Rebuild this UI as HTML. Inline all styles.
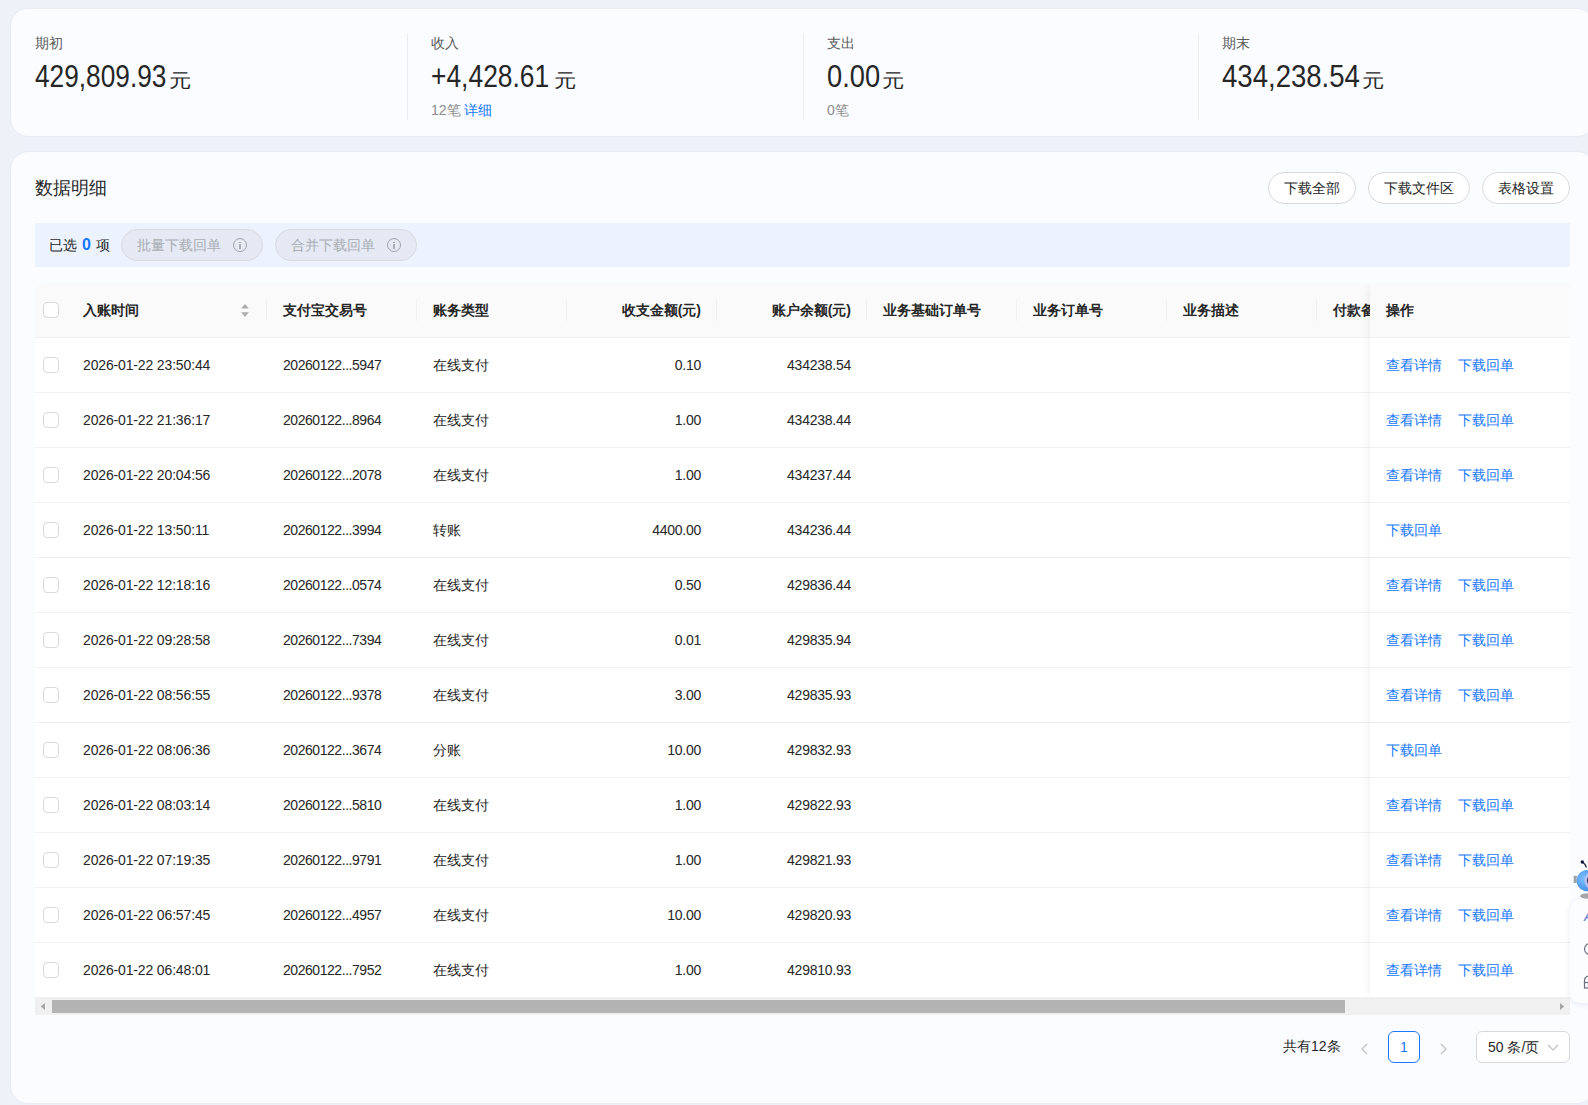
<!DOCTYPE html>
<html><head><meta charset="utf-8">
<style>
*{box-sizing:border-box;margin:0;padding:0}
html,body{width:1588px;height:1105px;overflow:hidden}
body{background:#eef1f8;font-family:"Liberation Sans",sans-serif;color:#262626;position:relative}
.abs{position:absolute;white-space:nowrap}
.card{position:absolute;background:#fafcff;border-radius:17px;box-shadow:0 0 2px rgba(90,110,150,.12)}
.lbl{font-size:14px;color:#595959;line-height:16px}
.big{font-size:31px;line-height:32px;color:#262626;transform-origin:0 0}
.yuan{font-size:21px;line-height:24px;color:#262626;transform:scale(1.06,0.9);transform-origin:0 19px}
.sub{font-size:14px;color:#8c8c8c;line-height:16px}
.vd{position:absolute;width:1px;background:#ebedf0}
.btn{position:absolute;height:32px;border:1px solid #d9d9d9;border-radius:16px;background:#fff;font-size:14px;line-height:30px;text-align:center;color:#262626}
.pill{position:absolute;height:32px;border:1px solid #d8dadd;border-radius:16px;background:#e4e9f3;font-size:14px;line-height:30px;color:#a9adb4;padding-left:15px}
.info{position:absolute;width:14px;height:14px;border:1.3px solid #9fa3aa;border-radius:50%}
.info:before{content:"";position:absolute;left:5px;top:2.5px;width:1.5px;height:1.5px;background:#a9adb4}
.info:after{content:"";position:absolute;left:5px;top:5px;width:1.5px;height:5px;background:#a9adb4}
.tbl{position:absolute;left:35px;top:283px;width:1535px;height:732px;background:#fff;border-radius:8px 0 0 0;overflow:hidden}
.thead{position:absolute;left:0;top:0;width:1535px;height:55px;background:#fafafa;border-bottom:1px solid #f0f0f0}
.th{position:absolute;top:19px;font-size:14px;font-weight:bold;line-height:16px;color:#262626}
.thd{position:absolute;top:16px;width:1px;height:22px;background:#f0f0f0}
.row{position:absolute;left:0;width:1535px;height:55px;border-bottom:1px solid #f0f0f0}
.td{position:absolute;top:19px;font-size:14px;line-height:16px;color:#262626;white-space:nowrap}
.cb{position:absolute;left:8px;top:19px;width:16px;height:16px;border:1px solid #d9d9d9;border-radius:4px;background:#fff}
.lk{color:#1677ff}
.dt{letter-spacing:-0.15px}
.tn{letter-spacing:-0.45px}
.bl{letter-spacing:-0.25px}
.fixed{position:absolute;left:1335px;top:0;width:200px;height:715px;background:#fff;box-shadow:-6px 0 8px -4px rgba(0,0,0,.06)}
.fhead{position:absolute;left:0;top:0;width:200px;height:55px;background:#fafafa;border-bottom:1px solid #f0f0f0}
.frow{position:absolute;left:0;width:200px;height:55px;border-bottom:1px solid #f0f0f0}
.sbar{position:absolute;left:0;top:714px;width:1535px;height:18px;background:#f0f0f0}
.thumb{position:absolute;left:17px;top:3px;width:1293px;height:13px;background:#b3b3b3}
.arrL{position:absolute;left:5.5px;top:5.5px;width:0;height:0;border-top:3.8px solid transparent;border-bottom:3.8px solid transparent;border-right:4.5px solid #a3a3a3}
.arrR{position:absolute;left:1524.5px;top:5.5px;width:0;height:0;border-top:3.8px solid transparent;border-bottom:3.8px solid transparent;border-left:4.5px solid #a3a3a3}
</style></head><body>

<!-- top stats card -->
<div class="card" style="left:11px;top:9px;width:1583px;height:127px"></div>
<div class="abs lbl" style="left:35px;top:35px">期初</div>
<div class="abs big" id="b1" style="transform:scaleX(0.847);left:35px;top:61px">429,809.93</div><div class="abs yuan" style="left:169px;top:68px">元</div>

<div class="vd" style="left:407px;top:33px;height:87px"></div>
<div class="abs lbl" style="left:431px;top:35px">收入</div>
<div class="abs big" id="b2" style="transform:scaleX(0.852);left:431px;top:61px">+4,428.61</div><div class="abs yuan" style="left:554px;top:68px">元</div>
<div class="abs sub" style="left:431px;top:102px">12笔 <span style="color:#1677ff">详细</span></div>

<div class="vd" style="left:803px;top:33px;height:87px"></div>
<div class="abs lbl" style="left:827px;top:35px">支出</div>
<div class="abs big" id="b3" style="transform:scaleX(0.879);left:827px;top:61px">0.00</div><div class="abs yuan" style="left:882px;top:68px">元</div>
<div class="abs sub" style="left:827px;top:102px">0笔</div>

<div class="vd" style="left:1198px;top:33px;height:87px"></div>
<div class="abs lbl" style="left:1222px;top:35px">期末</div>
<div class="abs big" id="b4" style="transform:scaleX(0.889);left:1222px;top:61px">434,238.54</div><div class="abs yuan" style="left:1362px;top:68px">元</div>

<!-- main card -->
<div class="card" style="left:11px;top:152px;width:1583px;height:951px"></div>
<div class="abs" style="left:35px;top:178px;font-size:18px;line-height:21px;color:#262626">数据明细</div>
<div class="btn" style="left:1268px;top:172px;width:88px">下载全部</div>
<div class="btn" style="left:1368px;top:172px;width:102px">下载文件区</div>
<div class="btn" style="left:1482px;top:172px;width:88px">表格设置</div>

<div class="abs" style="left:35px;top:223px;width:1535px;height:44px;background:#ecf3fe"></div>
<div class="abs" style="left:49px;top:237px;font-size:14px;line-height:16px;color:#262626">已选 <b style="color:#1677ff;font-size:16px;margin:0 1px">0</b> 项</div>
<div class="pill" style="left:121px;top:229px;width:142px">批量下载回单<i class="info" style="left:111px;top:8px"></i></div>
<div class="pill" style="left:275px;top:229px;width:142px">合并下载回单<i class="info" style="left:111px;top:8px"></i></div>

<div class="tbl" id="tbl">
  <div class="thead">
    <div class="cb" style="left:8px;top:19px"></div>
    <div class="th" style="left:48px">入账时间</div>
    <svg style="position:absolute;left:205px;top:19px" width="10" height="16" viewBox="0 0 10 16"><path d="M1.2 6.4 L5 1.9 L8.8 6.4Z M1.2 10.3 L8.8 10.3 L5 14.9Z" fill="#acacac"/></svg>
    <div class="thd" style="left:231px"></div>
    <div class="th" style="left:248px">支付宝交易号</div>
    <div class="thd" style="left:381px"></div>
    <div class="th" style="left:398px">账务类型</div>
    <div class="thd" style="left:531px"></div>
    <div class="th" style="right:869px">收支金额(元)</div>
    <div class="thd" style="left:681px"></div>
    <div class="th" style="right:719px">账户余额(元)</div>
    <div class="thd" style="left:831px"></div>
    <div class="th" style="left:848px">业务基础订单号</div>
    <div class="thd" style="left:981px"></div>
    <div class="th" style="left:998px">业务订单号</div>
    <div class="thd" style="left:1131px"></div>
    <div class="th" style="left:1148px">业务描述</div>
    <div class="thd" style="left:1281px"></div>
    <div class="th" style="left:1298px">付款备注</div>
  </div>
  <!--ROWS-->
<div class="row" style="top:55px"><div class="cb"></div><div class="td dt" style="left:48px">2026-01-22 23:50:44</div><div class="td tn" style="left:248px">20260122...5947</div><div class="td" style="left:398px">在线支付</div><div class="td bl" style="right:869px">0.10</div><div class="td bl" style="right:719px">434238.54</div></div>
<div class="row" style="top:110px"><div class="cb"></div><div class="td dt" style="left:48px">2026-01-22 21:36:17</div><div class="td tn" style="left:248px">20260122...8964</div><div class="td" style="left:398px">在线支付</div><div class="td bl" style="right:869px">1.00</div><div class="td bl" style="right:719px">434238.44</div></div>
<div class="row" style="top:165px"><div class="cb"></div><div class="td dt" style="left:48px">2026-01-22 20:04:56</div><div class="td tn" style="left:248px">20260122...2078</div><div class="td" style="left:398px">在线支付</div><div class="td bl" style="right:869px">1.00</div><div class="td bl" style="right:719px">434237.44</div></div>
<div class="row" style="top:220px"><div class="cb"></div><div class="td dt" style="left:48px">2026-01-22 13:50:11</div><div class="td tn" style="left:248px">20260122...3994</div><div class="td" style="left:398px">转账</div><div class="td bl" style="right:869px">4400.00</div><div class="td bl" style="right:719px">434236.44</div></div>
<div class="row" style="top:275px"><div class="cb"></div><div class="td dt" style="left:48px">2026-01-22 12:18:16</div><div class="td tn" style="left:248px">20260122...0574</div><div class="td" style="left:398px">在线支付</div><div class="td bl" style="right:869px">0.50</div><div class="td bl" style="right:719px">429836.44</div></div>
<div class="row" style="top:330px"><div class="cb"></div><div class="td dt" style="left:48px">2026-01-22 09:28:58</div><div class="td tn" style="left:248px">20260122...7394</div><div class="td" style="left:398px">在线支付</div><div class="td bl" style="right:869px">0.01</div><div class="td bl" style="right:719px">429835.94</div></div>
<div class="row" style="top:385px"><div class="cb"></div><div class="td dt" style="left:48px">2026-01-22 08:56:55</div><div class="td tn" style="left:248px">20260122...9378</div><div class="td" style="left:398px">在线支付</div><div class="td bl" style="right:869px">3.00</div><div class="td bl" style="right:719px">429835.93</div></div>
<div class="row" style="top:440px"><div class="cb"></div><div class="td dt" style="left:48px">2026-01-22 08:06:36</div><div class="td tn" style="left:248px">20260122...3674</div><div class="td" style="left:398px">分账</div><div class="td bl" style="right:869px">10.00</div><div class="td bl" style="right:719px">429832.93</div></div>
<div class="row" style="top:495px"><div class="cb"></div><div class="td dt" style="left:48px">2026-01-22 08:03:14</div><div class="td tn" style="left:248px">20260122...5810</div><div class="td" style="left:398px">在线支付</div><div class="td bl" style="right:869px">1.00</div><div class="td bl" style="right:719px">429822.93</div></div>
<div class="row" style="top:550px"><div class="cb"></div><div class="td dt" style="left:48px">2026-01-22 07:19:35</div><div class="td tn" style="left:248px">20260122...9791</div><div class="td" style="left:398px">在线支付</div><div class="td bl" style="right:869px">1.00</div><div class="td bl" style="right:719px">429821.93</div></div>
<div class="row" style="top:605px"><div class="cb"></div><div class="td dt" style="left:48px">2026-01-22 06:57:45</div><div class="td tn" style="left:248px">20260122...4957</div><div class="td" style="left:398px">在线支付</div><div class="td bl" style="right:869px">10.00</div><div class="td bl" style="right:719px">429820.93</div></div>
<div class="row" style="top:660px"><div class="cb"></div><div class="td dt" style="left:48px">2026-01-22 06:48:01</div><div class="td tn" style="left:248px">20260122...7952</div><div class="td" style="left:398px">在线支付</div><div class="td bl" style="right:869px">1.00</div><div class="td bl" style="right:719px">429810.93</div></div>
<!--/ROWS-->
  <div class="fixed">
    <div class="fhead"><div class="th" style="left:16px">操作</div></div>
<!--FIX-->
<div class="frow" style="top:55px"><span class="td lk" style="left:16px">查看详情</span><span class="td lk" style="left:88px">下载回单</span></div>
<div class="frow" style="top:110px"><span class="td lk" style="left:16px">查看详情</span><span class="td lk" style="left:88px">下载回单</span></div>
<div class="frow" style="top:165px"><span class="td lk" style="left:16px">查看详情</span><span class="td lk" style="left:88px">下载回单</span></div>
<div class="frow" style="top:220px"><span class="td lk" style="left:16px">下载回单</span></div>
<div class="frow" style="top:275px"><span class="td lk" style="left:16px">查看详情</span><span class="td lk" style="left:88px">下载回单</span></div>
<div class="frow" style="top:330px"><span class="td lk" style="left:16px">查看详情</span><span class="td lk" style="left:88px">下载回单</span></div>
<div class="frow" style="top:385px"><span class="td lk" style="left:16px">查看详情</span><span class="td lk" style="left:88px">下载回单</span></div>
<div class="frow" style="top:440px"><span class="td lk" style="left:16px">下载回单</span></div>
<div class="frow" style="top:495px"><span class="td lk" style="left:16px">查看详情</span><span class="td lk" style="left:88px">下载回单</span></div>
<div class="frow" style="top:550px"><span class="td lk" style="left:16px">查看详情</span><span class="td lk" style="left:88px">下载回单</span></div>
<div class="frow" style="top:605px"><span class="td lk" style="left:16px">查看详情</span><span class="td lk" style="left:88px">下载回单</span></div>
<div class="frow" style="top:660px"><span class="td lk" style="left:16px">查看详情</span><span class="td lk" style="left:88px">下载回单</span></div>
<!--/FIX-->
  </div>
  <div class="sbar"><svg style="position:absolute;left:0;top:0" width="1535" height="18"><path d="M10 6 L10 13 L5.7 9.5Z M1525 6 L1525 13 L1529.3 9.5Z" fill="#a6a6a6"/></svg><div class="thumb"></div></div>
</div>

<!-- pagination -->
<div class="abs" style="left:1283px;top:1038px;font-size:14px;line-height:16px;color:#262626">共有12条</div>
<svg class="abs" style="left:1358px;top:1042px" width="12" height="14" viewBox="0 0 12 14"><path d="M9 2 L4 7 L9 12" fill="none" stroke="#bfbfbf" stroke-width="1.2"/></svg>
<div class="abs" style="left:1388px;top:1031px;width:32px;height:32px;border:1px solid #1677ff;border-radius:6px;background:#fff;font-size:14px;line-height:30px;text-align:center;color:#1677ff">1</div>
<svg class="abs" style="left:1438px;top:1042px" width="12" height="14" viewBox="0 0 12 14"><path d="M3 2 L8 7 L3 12" fill="none" stroke="#bfbfbf" stroke-width="1.2"/></svg>
<div class="abs" style="left:1476px;top:1031px;width:94px;height:32px;border:1px solid #d9d9d9;border-radius:6px;background:#fff"></div>
<div class="abs" style="left:1488px;top:1039px;font-size:14px;line-height:16px;color:#262626">50 条/页</div>
<svg class="abs" style="left:1546px;top:1042px" width="14" height="12" viewBox="0 0 14 12"><path d="M2 3 L7 8 L12 3" fill="none" stroke="#bfbfbf" stroke-width="1.2"/></svg>

<!-- right floating widget -->
<div class="abs" style="left:1570px;top:899px;width:40px;height:104px;background:#fcfdff;border-radius:10px;box-shadow:0 1px 6px rgba(40,60,120,.10)"></div>
<svg class="abs" style="left:1570px;top:855px" width="18" height="150" viewBox="0 0 18 150">
  <defs><radialGradient id="hg" cx="0.35" cy="0.4" r="0.7"><stop offset="0" stop-color="#7cc0ff"/><stop offset="1" stop-color="#3d8ae6"/></radialGradient></defs>
  <path d="M12.3 7 Q15 8.5 16.2 12" fill="none" stroke="#1a1f3a" stroke-width="1.3" stroke-linecap="round"/>
  <circle cx="12.3" cy="7" r="1.7" fill="#11163a"/>
  <ellipse cx="19" cy="41" rx="9" ry="2.8" fill="#a2a4a8"/>
  <rect x="3.7" y="20.8" width="3" height="7.2" rx="0.5" fill="#9ea3aa"/>
  <ellipse cx="17.6" cy="25.6" rx="11" ry="10.7" fill="url(#hg)"/>
  <ellipse cx="20.5" cy="25.6" rx="6.2" ry="7.6" fill="#b3bff0"/>
  <ellipse cx="22" cy="25.6" rx="4.8" ry="6.3" fill="#0d1540"/>
  <text x="14" y="66" font-family="Liberation Sans" font-size="14" fill="#5b7ddb" font-style="italic">A</text>
  <circle cx="20" cy="94" r="5.5" fill="none" stroke="#6b7080" stroke-width="1.2"/>
  <path d="M14.5 128 L14.5 126 Q14.5 121 20 121" fill="none" stroke="#6b7080" stroke-width="1.2"/>
  <rect x="14.5" y="127.5" width="4" height="5.5" fill="none" stroke="#6b7080" stroke-width="1.2"/>
</svg>
</body></html>
